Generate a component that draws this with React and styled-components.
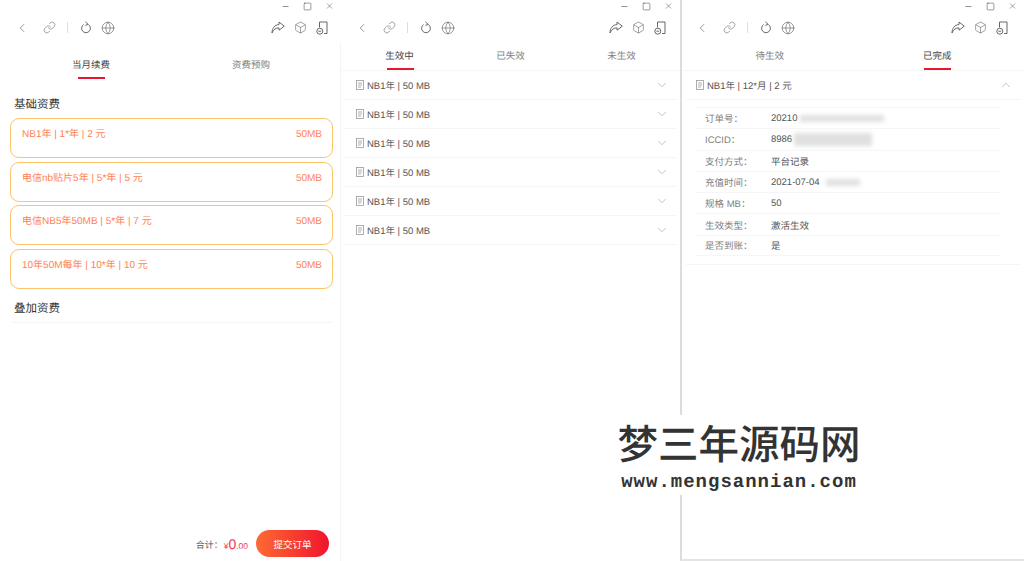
import React from "react";
import styled, { createGlobalStyle } from "styled-components";
import { ChevronLeft, ChevronDown, ChevronUp, Link as LinkIcon, Minus, Square, X, Globe, Box } from "lucide-react";

const Global = createGlobalStyle`
  html, body { margin: 0; padding: 0; background: #fff; overflow: hidden; }
  body {
    font-family: "Liberation Sans", "Noto Sans CJK SC", sans-serif;
    text-rendering: geometricPrecision;
  }
`;

const Page = styled.div`
  position: relative;
  display: grid;
  grid-template-columns: 340px 340px 344px;
  width: 1024px;
  height: 561px;
  overflow: hidden;
`;

const Panel = styled.section`
  position: relative;
  display: flex;
  flex-direction: column;
  height: 561px;
  box-sizing: border-box;
  border-left: ${(p) => (p.$strong ? "2px solid #dcdcdc" : "none")};
  border-bottom: ${(p) => (p.$strong ? "2px solid #e4e4e4" : "none")};

  &::after {
    content: "";
    display: ${(p) => (p.$seam ? "block" : "none")};
    position: absolute;
    top: 42px;
    bottom: 0;
    left: 0;
    width: 1px;
    background: #f4f4f4;
  }
`;

const TitleBar = styled.div`
  display: flex;
  justify-content: flex-end;
  align-items: center;
  gap: 13px;
  height: 12px;
  padding-right: ${(p) => p.$right}px;
  color: #444;
`;

const WinButton = styled.span`
  display: flex;
  justify-content: center;
  width: 9px;
`;

const Toolbar = styled.div`
  display: flex;
  align-items: center;
  height: 31px;
  padding: 0 ${(p) => p.$right}px 0 ${(p) => p.$left}px;
  color: #666;
`;

const ToolIcon = styled.span`
  display: flex;
  justify-content: center;
  align-items: center;
  width: 14px;
  margin-left: ${(p) => p.$ml || 0}px;
`;

const ToolDivider = styled.span`
  width: 1px;
  height: 11px;
  margin: 0 11px;
  background: #dedede;
`;

const ToolSpacer = styled.span`
  flex: 1;
`;

const Tabs = styled.div`
  display: grid;
  grid-auto-flow: column;
  grid-auto-columns: 1fr;
  padding: ${(p) => (p.$tall ? "16px 9px 0 11px" : "7px 3px 0 4px")};
  border-bottom: ${(p) => (p.$tall ? "none" : "1px solid #f6f6f6")};
`;

const Tab = styled.div`
  position: relative;
  height: ${(p) => (p.$tall ? "20px" : "20px")};
  text-align: center;
  font-size: 9.5px;
  line-height: 14px;
  color: ${(p) => (p.$active ? "#444" : "#808080")};

  &::after {
    content: "";
    display: ${(p) => (p.$active ? "block" : "none")};
    position: absolute;
    left: 50%;
    bottom: 0;
    width: 27px;
    height: 2px;
    margin-left: -13px;
    background: #e8172f;
  }
`;

const SectionTitle = styled.h3`
  margin: ${(p) => p.$top}px 0 0;
  padding-left: 14px;
  font-size: 11.5px;
  font-weight: 400;
  line-height: 16px;
  color: #333;
`;

const PlanList = styled.div`
  display: flex;
  flex-direction: column;
  gap: 3.5px;
  margin: 5px 7px 0 10px;
`;

const PlanCard = styled.div`
  display: flex;
  justify-content: space-between;
  height: 40px;
  box-sizing: border-box;
  padding: 9px 10px 0 11px;
  border: 1.3px solid #fdc46b;
  border-radius: 9px;
  font-size: 10px;
  line-height: 14px;
  color: #ff7f50;
`;

const Rule = styled.div`
  height: 1px;
  margin: 5px 8px 0 12px;
  background: #f6f6f6;
`;

const Footer = styled.div`
  display: flex;
  justify-content: flex-end;
  align-items: center;
  margin-top: auto;
  padding: 0 11px 4px 0;
`;

const TotalLabel = styled.span`
  position: relative;
  top: 1px;
  font-size: 9px;
  color: #555;
`;

const TotalValue = styled.span`
  margin: 0 8px 0 1px;
  font-size: 8.5px;
  color: #f0384f;

  b {
    font-size: 14px;
    font-weight: 400;
  }
`;

const SubmitButton = styled.button`
  width: 73px;
  height: 27px;
  padding: 0;
  border: none;
  border-radius: 14px;
  background: linear-gradient(90deg, #ff6a33, #f0142d);
  color: #fff;
  font-family: inherit;
  font-size: 9.5px;
`;

const OrderRow = styled.div`
  display: flex;
  align-items: center;
  height: 29px;
  box-sizing: border-box;
  padding: 0 8px 0 ${(p) => p.$left || 12}px;
  margin: 0 3px 0 4px;
  border-bottom: 1px solid #f6f6f6;
  font-size: 9.5px;
  color: #555;
`;

const OrderName = styled.span`
  flex: 1;
  margin-left: 3px;
`;

const Details = styled.div`
  margin: 7px 3px 0 4px;
  padding-bottom: 8px;
  border-bottom: 1px solid #f6f6f6;
`;

const DetailRow = styled.div`
  display: flex;
  align-items: center;
  height: 21.3px;
  box-sizing: border-box;
  margin: 0 21px 0 9px;
  padding: 0 0 0 10px;
  border-top: 1px solid #f6f6f6;
  border-bottom: ${(p) => (p.$last ? "1px solid #f6f6f6" : "none")};
  font-size: 9.5px;
`;

const DetailLabel = styled.span`
  width: 66px;
  color: #808080;
`;

const DetailValue = styled.span`
  display: flex;
  align-items: center;
  color: #555;
`;

const Smudge = styled.span`
  display: inline-block;
  width: ${(p) => p.$w}px;
  height: ${(p) => p.$h}px;
  margin-left: ${(p) => p.$ml}px;
  background: #e0e0e0;
  filter: blur(2px);
`;

const Watermark = styled.div`
  position: absolute;
  left: 606px;
  top: 415px;
  width: 266px;
  height: 80px;
  background: #fff;
  text-align: center;
  color: #333;
`;

const WatermarkTitle = styled.div`
  margin-top: 1px;
  font-family: "Noto Sans CJK SC", sans-serif;
  font-size: 40.5px;
  font-weight: 500;
  line-height: 52px;
`;

const WatermarkUrl = styled.div`
  margin-top: 4px;
  font-family: "Liberation Mono", monospace;
  font-size: 19px;
  font-weight: 700;
  line-height: 20px;
  letter-spacing: 1px;
`;

const DocIcon = () => (
  <svg width="8" height="10" viewBox="0 0 8 10" fill="none" stroke="#9a9a9a" strokeWidth="0.8">
    <rect x="0.5" y="0.5" width="7" height="9" />
    <path d="M2 3h4M2 5h4M2 7h3" />
  </svg>
);

const RefreshIcon = () => (
  <svg width="12" height="13" viewBox="0 0 12 13" fill="none" stroke="#666" strokeWidth="1">
    <path d="M8.4 3.6a4.4 4.4 0 1 1-4.8 0" />
    <path d="M5.4 0.8l2.8 2.6-2.8 1" />
  </svg>
);

const ShareIcon = () => (
  <svg width="14" height="13" viewBox="0 0 14 13" fill="none" stroke="#666" strokeWidth="1" strokeLinejoin="round">
    <path d="M8 1l5.3 4.2L8 9.2V6.9C4.8 6.8 2.6 8.4 1 12 1 7.6 3.6 3.8 8 3.5z" />
  </svg>
);

const DeviceIcon = () => (
  <svg width="12" height="14" viewBox="0 0 12 14" fill="none" stroke="#666" strokeWidth="1">
    <path d="M3.5 6.5V1h7.5v11.5H8" />
    <circle cx="3.8" cy="10.2" r="3" />
    <path d="M2.4 10.2h2.8" />
  </svg>
);

function Chrome({ titleRight, toolLeft = 15, toolRight }) {
  return (
    <>
      <TitleBar $right={titleRight}>
        <WinButton><Minus size={11} strokeWidth={1.5} /></WinButton>
        <WinButton><Square size={9} strokeWidth={1.4} /></WinButton>
        <WinButton><X size={12} strokeWidth={1.3} /></WinButton>
      </TitleBar>
      <Toolbar $left={toolLeft} $right={toolRight}>
        <ToolIcon><ChevronLeft size={16} strokeWidth={1.2} /></ToolIcon>
        <ToolIcon $ml={13}><LinkIcon size={13} strokeWidth={1.1} /></ToolIcon>
        <ToolDivider />
        <ToolIcon><RefreshIcon /></ToolIcon>
        <ToolIcon $ml={8}><Globe size={14} strokeWidth={1.1} /></ToolIcon>
        <ToolSpacer />
        <ToolIcon><ShareIcon /></ToolIcon>
        <ToolIcon $ml={8}><Box size={13} strokeWidth={1.1} /></ToolIcon>
        <ToolIcon $ml={8}><DeviceIcon /></ToolIcon>
      </Toolbar>
    </>
  );
}

const plans = [
  "NB1年 | 1*年 | 2 元",
  "电信nb贴片5年 | 5*年 | 5 元",
  "电信NB5年50MB | 5*年 | 7 元",
  "10年50M每年 | 10*年 | 10 元",
];

const details = [
  ["订单号：", "20210", { w: 84, h: 7, ml: 3 }],
  ["ICCID：", "8986", { w: 78, h: 13, ml: 2 }],
  ["支付方式：", "平台记录"],
  ["充值时间：", "2021-07-04", { w: 34, h: 7, ml: 6 }],
  ["规格 MB：", "50"],
  ["生效类型：", "激活生效"],
  ["是否到账：", "是"],
];

export default function App() {
  return (
    <Page>
      <Global />

      <Panel>
        <Chrome titleRight={6} toolRight={11} />
        <Tabs $tall>
          <Tab $tall $active>当月续费</Tab>
          <Tab $tall>资费预购</Tab>
        </Tabs>
        <SectionTitle $top={18}>基础资费</SectionTitle>
        <PlanList>
          {plans.map((plan) => (
            <PlanCard key={plan}>
              <span>{plan}</span>
              <span>50MB</span>
            </PlanCard>
          ))}
        </PlanList>
        <SectionTitle $top={12}>叠加资费</SectionTitle>
        <Rule />
        <Footer>
          <TotalLabel>合计：</TotalLabel>
          <TotalValue>¥<b>0</b>.00</TotalValue>
          <SubmitButton>提交订单</SubmitButton>
        </Footer>
      </Panel>

      <Panel $seam>
        <Chrome titleRight={7} toolRight={13} />
        <Tabs>
          <Tab $active>生效中</Tab>
          <Tab>已失效</Tab>
          <Tab>未生效</Tab>
        </Tabs>
        {[0, 1, 2, 3, 4, 5].map((i) => (
          <OrderRow key={i}>
            <DocIcon />
            <OrderName>NB1年 | 50 MB</OrderName>
            <ChevronDown size={14} strokeWidth={1} color="#999" />
          </OrderRow>
        ))}
      </Panel>

      <Panel $strong>
        <Chrome titleRight={7} toolLeft={13} toolRight={15} />
        <Tabs>
          <Tab>待生效</Tab>
          <Tab $active>已完成</Tab>
        </Tabs>
        <OrderRow $left={10}>
          <DocIcon />
          <OrderName>NB1年 | 12*月 | 2 元</OrderName>
          <ChevronUp size={14} strokeWidth={1} color="#999" />
        </OrderRow>
        <Details>
          {details.map(([label, value, smudge], i) => (
            <DetailRow key={label} $last={i === details.length - 1}>
              <DetailLabel>{label}</DetailLabel>
              <DetailValue>
                {value}
                {smudge && <Smudge $w={smudge.w} $h={smudge.h} $ml={smudge.ml} />}
              </DetailValue>
            </DetailRow>
          ))}
        </Details>
      </Panel>

      <Watermark>
        <WatermarkTitle>梦三年源码网</WatermarkTitle>
        <WatermarkUrl>www.mengsannian.com</WatermarkUrl>
      </Watermark>
    </Page>
  );
}
